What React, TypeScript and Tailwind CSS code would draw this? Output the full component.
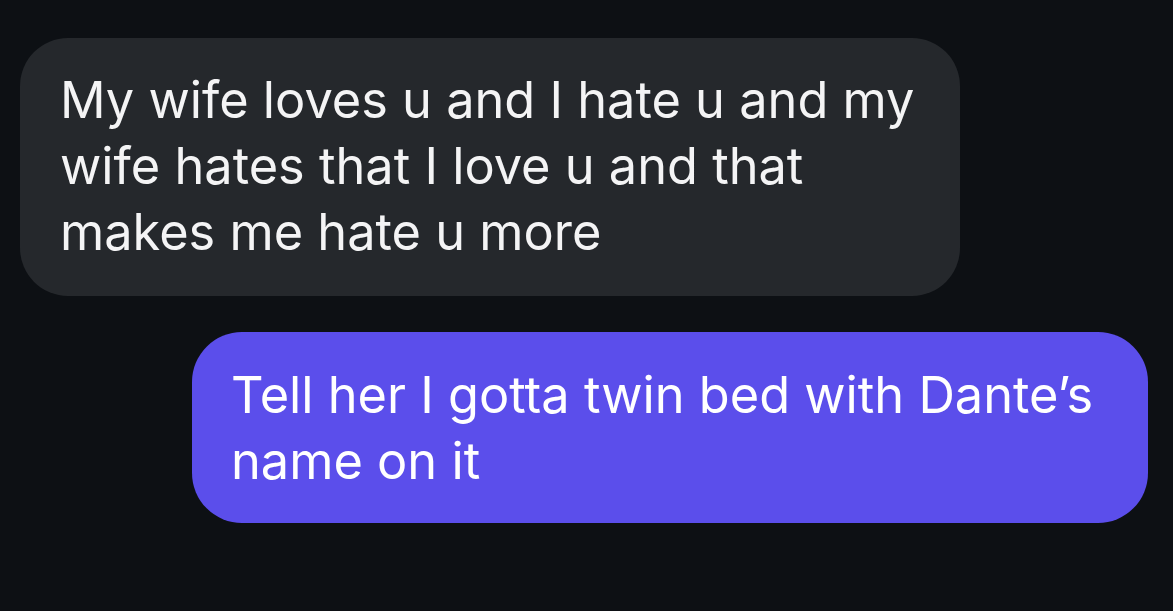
import React from 'react';

const messages = [
  {
    id: 1,
    mine: false,
    text: 'My wife loves u and I hate u and my wife hates that I love u and that makes me hate u more',
  },
  {
    id: 2,
    mine: true,
    text: 'Tell her I gotta twin bed with Dante’s name on it',
  },
];

export default function App() {
  return (
    <div
      className="h-[611px] w-full overflow-hidden bg-[#0d1014] flex flex-col pt-[38px] pl-[20px] pr-[25px]"
      style={{ fontFamily: 'Inter, "Noto Sans", sans-serif' }}
    >
      {messages.map(m => (
        <div
          key={m.id}
          className={
            m.mine
              ? 'self-end mt-[36px] w-[956px] rounded-[50px] bg-[#5b4eeb] pl-[39px] pr-[30px] pt-[30px] pb-[29px] text-[50.5px] leading-[66px] text-white'
              : 'self-start w-[940px] rounded-[48px] bg-[#25282c] pl-[40px] pr-[40px] pt-[29px] pb-[31px] text-[50.5px] leading-[66px] text-[#f4f4f5]'
          }
        >
          {m.text}
        </div>
      ))}
    </div>
  );
}
